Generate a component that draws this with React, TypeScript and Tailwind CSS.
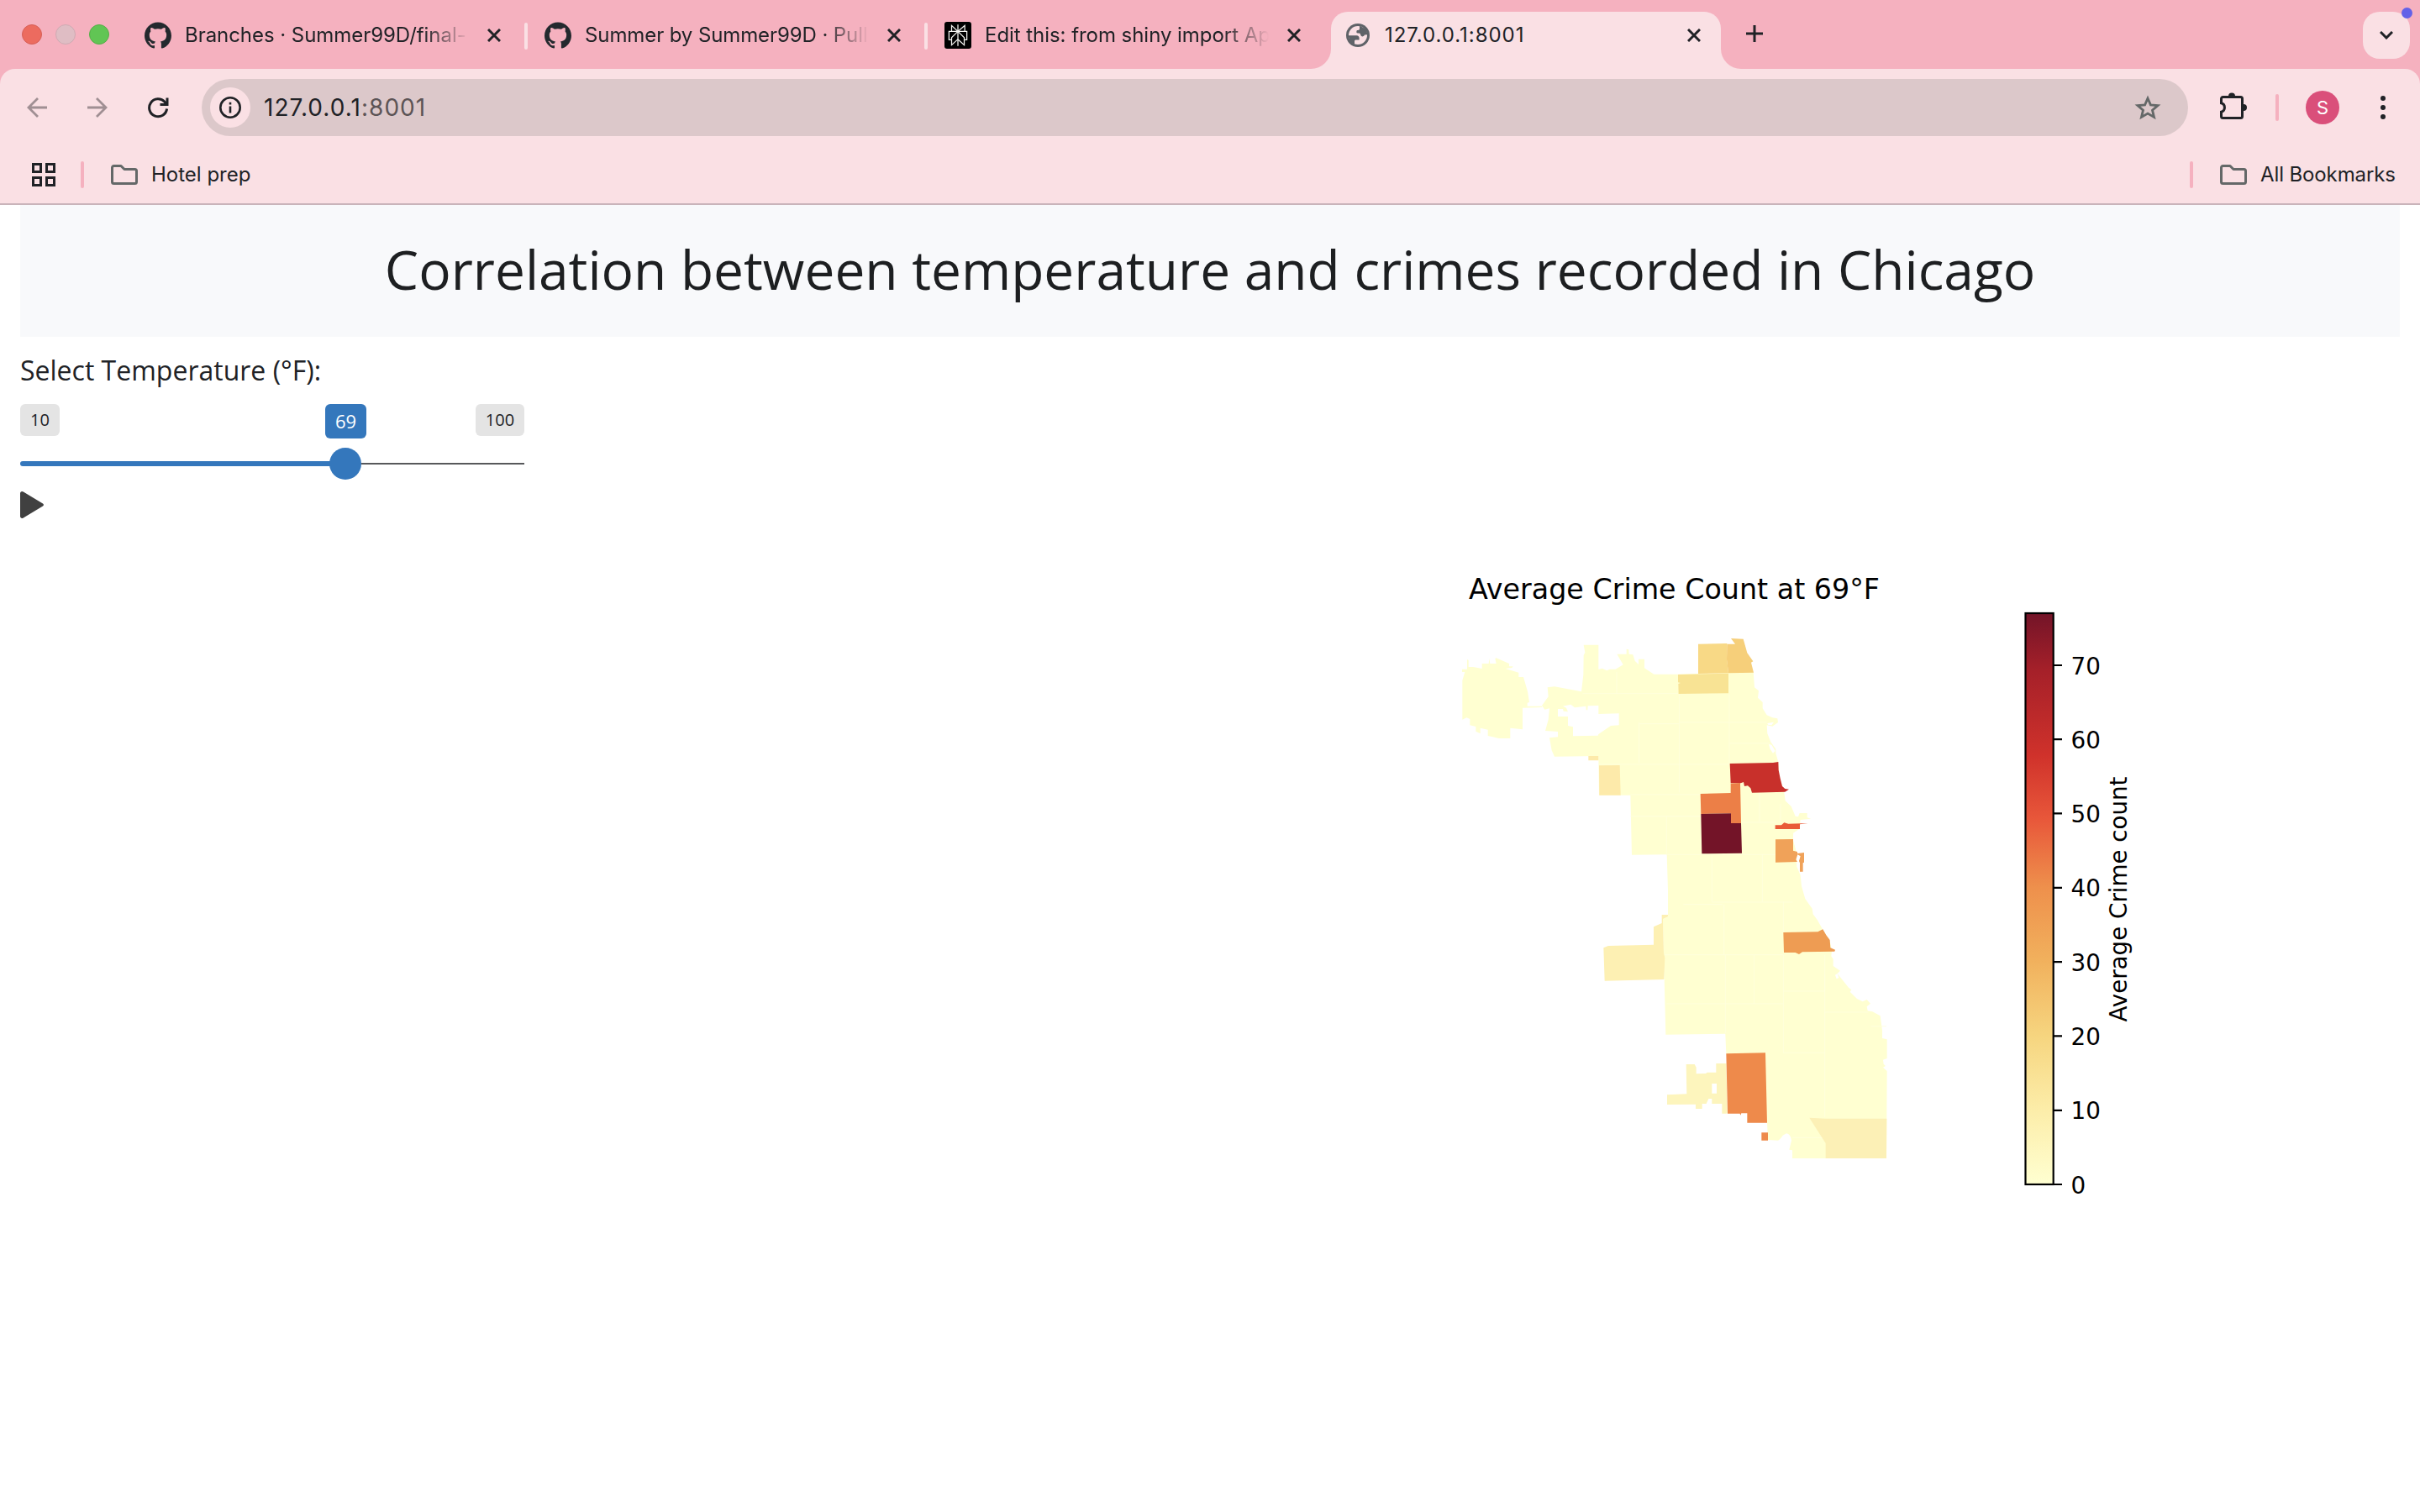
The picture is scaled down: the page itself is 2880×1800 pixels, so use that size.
import React from "react";
import { SiGithub } from "react-icons/si";

const ui = "font-['Inter','Liberation_Sans',sans-serif]";

function CloseIcon() {
  return (
    <svg className="size-4 shrink-0" viewBox="0 0 16 16" fill="none" stroke="#202226" strokeWidth="3">
      <path d="M1 1L15 15M15 1L1 15" />
    </svg>
  );
}

function PerplexityIcon() {
  return (
    <span className="flex size-8 shrink-0 items-center justify-center rounded-[3px] bg-black">
      <svg className="size-[26px]" viewBox="0 0 24 24" fill="#f4f4f0">
        <path d="M22.3977 7.0896h-2.3106V.0676l-7.5094 6.3542V.1577h-1.1554v6.1966L4.4904 0v7.0896H1.6023v10.3976h2.8882V24l6.932-6.3591v6.2005h1.1554v-6.0469l6.9318 6.1807v-6.4879h2.8882V7.0896zm-3.4657-4.531v4.531h-5.355l5.355-4.531zm-13.2862.0676 4.8691 4.4634H5.6458V2.6262zM2.7576 16.332V8.245h7.8476l-6.1149 6.1147v1.9723H2.7576zm2.8882 5.0404v-3.8852h.0001v-2.6488l5.7763-5.7764v7.0111l-5.7764 5.2993zm12.7086.0248-5.7766-5.1509V9.0618l5.7766 5.7766v6.5588zm2.8882-5.0652h-1.733v-1.9723L13.3948 8.245h7.8478v8.087z" />
      </svg>
    </span>
  );
}

function FolderIcon() {
  return (
    <svg className="h-6 w-8 shrink-0" viewBox="0 0 32 24" fill="none" stroke="#646868" strokeWidth="3" strokeLinejoin="round">
      <path d="M1.5 3.5a2 2 0 0 1 2-2H12l4 4h12.5a2 2 0 0 1 2 2v13a2 2 0 0 1-2 2h-25a2 2 0 0 1-2-2z" />
    </svg>
  );
}

function Tab({ icon, title, width, fade, spacing }: { icon: React.ReactNode; title: string; width: string; fade: string; spacing: string }) {
  return (
    <div className={`flex h-8 shrink-0 items-center ${width}`}>
      {icon}
      <div className={`ml-4 w-[338px] overflow-hidden whitespace-nowrap text-[24px] leading-8 text-[#202226] ${fade} ${spacing}`}>{title}</div>
      <div className="ml-[22px] flex">
        <CloseIcon />
      </div>
    </div>
  );
}

function TabStrip() {
  const fade = "[mask-image:linear-gradient(to_right,black_84%,transparent_100%)]";
  return (
    <div className="flex h-[82px] bg-[#f5b1bf]">
      <div className="flex h-[82px] w-[172px] shrink-0 items-center gap-4 pl-[26px]">
        <div className="size-6 rounded-full border border-[#d65f57] bg-[#ec6b5f]" />
        <div className="size-6 rounded-full border border-[#cfaab2] bg-[#dfbdc4]" />
        <div className="size-6 rounded-full border border-[#56ad48] bg-[#61c554]" />
      </div>
      <div className="flex h-8 pt-[26px]">
        <Tab icon={<SiGithub className="size-8 shrink-0 text-[#24292e]" />} title="Branches · Summer99D/final-" width="w-[452px]" fade={fade} spacing="tracking-[-0.05px]" />
        <div className="mt-px h-8 w-1 shrink-0 rounded-full bg-[#fae0e4]" />
        <div className="w-5 shrink-0" />
        <Tab icon={<SiGithub className="size-8 shrink-0 text-[#24292e]" />} title="Summer by Summer99D · Pull" width="w-[452px]" fade={fade} spacing="tracking-[-0.1px]" />
        <div className="mt-px h-8 w-1 shrink-0 rounded-full bg-[#fae0e4]" />
        <div className="w-5 shrink-0" />
        <Tab icon={<PerplexityIcon />} title="Edit this: from shiny import Ap" width="w-[436px]" fade={fade} spacing="tracking-[-0.05px]" />
      </div>
      <svg className="mt-[14px] h-[68px] w-6 shrink-0" viewBox="0 0 24 68" fill="#fae0e4">
        <path d="M24 44A24 24 0 0 1 0 68H24z" />
      </svg>
      <div className="mt-[14px] flex h-[68px] w-[464px] shrink-0 rounded-t-[20px] bg-[#fae0e4] pl-[18px] pt-[14px]">
        <GlobeIcon />
        <div className="-mt-[2px] ml-[18px] w-[360px] whitespace-nowrap text-[24px] leading-8 tracking-[0.95px] text-[#202226]">127.0.0.1:8001</div>
        <div className="mt-[6px]">
          <CloseIcon />
        </div>
      </div>
      <svg className="mt-[14px] h-[68px] w-6 shrink-0" viewBox="0 0 24 68" fill="#fae0e4">
        <path d="M0 44A24 24 0 0 0 24 68H0z" />
      </svg>
      <svg className="ml-[6px] mt-[30px] size-5 shrink-0" viewBox="0 0 20 20" stroke="#202226" strokeWidth="3">
        <path d="M10 0V20M0 10H20" />
      </svg>
      <div className="relative ml-auto mr-3 mt-[14px] flex size-14 items-center justify-center rounded-[20px] bg-[#fae0e4]">
        <svg className="h-[10px] w-4" viewBox="0 0 16 10" fill="none" stroke="#202226" strokeWidth="3">
          <path d="M1 1L8 8L15 1" />
        </svg>
        <div className="absolute -right-[3px] -top-[5px] size-[13px] rounded-full bg-[#6361e8]" />
      </div>
    </div>
  );
}

function GlobeIcon() {
  return (
    <svg className="size-7 shrink-0" viewBox="0 0 28 28">
      <circle cx="14" cy="14" r="14" fill="#5f6368" />
      <circle cx="14" cy="14" r="11" fill="#fae0e4" />
      <path
        d="M2.500 14.200H12.500Q15.600 14.600 15.600 17.500V19.400H11.200Q10 19.600 10 21V25L5 23zM16 2.500V6.200Q16 8 14.200 8H13.200Q12.400 8.200 12.400 9.200V10.800Q12.600 11.600 14 11.600H15.600Q17 11.800 17.200 13.500Q17.600 15.400 19.600 15.400Q21.600 15.200 22 13.600L25.500 13.200L24 7z"
        fill="#5f6368"
      />
    </svg>
  );
}

function Toolbar() {
  return (
    <div className="bg-[#f5b1bf]">
      <div className="flex h-[92px] items-center rounded-t-[18px] bg-[#fae0e4]">
        <svg className="ml-8 size-6 shrink-0" viewBox="0 0 24 24" fill="none" stroke="#a08f93" strokeWidth="2.8">
          <path d="M24 12H2M13 1L2 12L13 23" />
        </svg>
        <svg className="ml-12 size-6 shrink-0" viewBox="0 0 24 24" fill="none" stroke="#a08f93" strokeWidth="2.8">
          <path d="M0 12H22M11 1L22 12L11 23" />
        </svg>
        <svg className="ml-12 size-[25px] shrink-0" viewBox="0 0 25 25" fill="none" stroke="#202226" strokeWidth="3">
          <path d="M22.6 13.5A10.5 10.5 0 1 1 20 5.3L22.5 8.3" />
          <path d="M23 .5V8.6H14.5" />
        </svg>
        <div className="ml-[39px] flex h-[68px] w-[2364px] items-center rounded-full bg-[#dcc8ca] pl-[10px] pr-8">
          <div className="flex size-12 items-center justify-center rounded-full bg-[#fae0e4]">
            <svg className="size-[26px]" viewBox="0 0 26 26" fill="none" stroke="#202226" strokeWidth="2.6">
              <circle cx="13" cy="13" r="11.7" />
              <path d="M13 11.5V19.5M13 6.8V9.4" />
            </svg>
          </div>
          <div className="ml-4 text-[28px] leading-9 tracking-[1.05px] text-[#202226]">
            127.0.0.1<span className="text-[#5c5456]">:8001</span>
          </div>
          <svg className="ml-auto h-[30px] w-8 shrink-0" viewBox="0 0 32 30" fill="none" stroke="#646868" strokeWidth="2.8">
            <path d="M16 4L19.4 11.9L28 12.6L21.5 18.2L23.5 26.4L16 22L8.500 26.400L10.5 18.2L4 12.600L12.600 11.900z" />
          </svg>
        </div>
        <svg className="mb-1 ml-[38px] size-8 shrink-0" viewBox="0 0 32 32">
          <path d="M3.500 5.500H24.500a2 2 0 0 1 2 2V28.500a2 2 0 0 1-2 2H3.500a2 2 0 0 1-2-2V23.200a5.400 5.400 0 0 0 0-10.400V7.500a2 2 0 0 1 2-2z" fill="none" stroke="#202226" strokeWidth="3" />
          <path d="M10 4.500a4 4 0 0 1 8 0zM28 14a4 4 0 0 1 0 8z" fill="#202226" />
        </svg>
        <div className="ml-[34px] h-8 w-1 rounded-full bg-[#f5b1bf]" />
        <div className="ml-8 flex size-10 items-center justify-center rounded-full bg-[#da4f7a] text-[22px] text-white">S</div>
        <svg className="ml-[49px] h-7 w-[6px]" viewBox="0 0 6 28" fill="#202226">
          <circle cx="3" cy="3" r="3" />
          <circle cx="3" cy="14" r="3" />
          <circle cx="3" cy="25" r="3" />
        </svg>
      </div>
    </div>
  );
}

function BookmarksBar() {
  return (
    <div className="flex h-[70px] items-center border-b-2 border-[#c9b4ba] bg-[#fae0e4] pb-0 text-[24px] text-[#202226]">
      <svg className="ml-[38px] size-7" viewBox="0 0 28 28" fill="none" stroke="#202226" strokeWidth="3">
        <path d="M1.500 1.500h9v9h-9zM17.500 1.500h9v9h-9zM1.500 17.500h9v9h-9zM17.500 17.500h9v9h-9z" />
      </svg>
      <div className="ml-[30px] h-8 w-1 rounded-full bg-[#f5b1bf]" />
      <div className="ml-8 flex items-center gap-4">
        <FolderIcon />
        <span>Hotel prep</span>
      </div>
      <div className="ml-auto h-8 w-1 rounded-full bg-[#f5b1bf]" />
      <div className="ml-8 flex w-[238px] items-center gap-4 whitespace-nowrap">
        <FolderIcon />
        <span className="tracking-[-0.12px]">All Bookmarks</span>
      </div>
    </div>
  );
}

function TemperatureSlider() {
  return (
    <div className="ml-6 w-[600px] text-[#202226]">
      <div className="mt-[18px] text-[32px] leading-[44px]">Select Temperature (°F):</div>
      <div className="mt-[18px] flex h-[41px] items-start">
        <div className="flex h-[38px] w-[47px] items-center justify-center rounded-md bg-[#e4e4e4] text-[20px]">10</div>
        <div className="ml-[316px] flex h-[41px] w-[49px] items-center justify-center rounded-md bg-[#3477bc] text-[22px] text-white">69</div>
        <div className="ml-auto flex h-[38px] w-[58px] items-center justify-center rounded-md bg-[#e4e4e4] text-[20px]">100</div>
      </div>
      <div className="mt-[11px] flex h-[38px] items-center">
        <div className="h-[6px] w-[369px] rounded-l-sm bg-[#3477bc]" />
        <div className="-ml-px size-[38px] shrink-0 rounded-full bg-[#3477bc]" />
        <div className="h-[2px] grow bg-[#57585b]" />
      </div>
      <svg className="mt-[14px] h-8 w-7" viewBox="0 0 28 32" fill="#404040">
        <path d="M0 2.500C0 .4 2 -.6 3.800 .6L27 14.400C28.300 15.300 28.300 16.700 27 17.600L3.800 31.400C2 32.600 0 31.600 0 29.500z" />
      </svg>
    </div>
  );
}

const TICKS = [
  { label: "70", y: 792 },
  { label: "60", y: 880.2 },
  { label: "50", y: 968.4 },
  { label: "40", y: 1056.800 },
  { label: "30", y: 1145.100 },
  { label: "20", y: 1233.400 },
  { label: "10", y: 1321.900 },
  { label: "0", y: 1410 },
];

function CrimeMap() {
  return (
    <svg className="ml-[1720px] mt-[43px] h-[780px] w-[860px] shrink-0" viewBox="1720 660 860 780">
      <defs>
        <linearGradient id="heat" x1="0" y1="1" x2="0" y2="0">
          <stop offset="0" stopColor="#ffffd1" />
          <stop offset=".13" stopColor="#fceda9" />
          <stop offset=".26" stopColor="#f6d57f" />
          <stop offset=".39" stopColor="#f1b15d" />
          <stop offset=".52" stopColor="#ee904c" />
          <stop offset=".64" stopColor="#e8573a" />
          <stop offset=".75" stopColor="#d0322b" />
          <stop offset=".9" stopColor="#a52029" />
          <stop offset="1" stopColor="#731428" />
        </linearGradient>
      </defs>
      <g fontFamily="DejaVu Sans, sans-serif" fill="#000">
        <text x="1748" y="712.700" fontSize="33.300" textLength="489">Average Crime Count at 69°F</text>
        {TICKS.map((t) => (
          <text key={t.label} x="2464.500" y={t.y + 10.500} fontSize="27.800">
            {t.label}
          </text>
        ))}
        <text transform="translate(2531 1216.500) rotate(-90)" fontSize="27.800" textLength="292">Average Crime count</text>
      </g>
      <g transform="translate(1720 660) scale(.33333)">
        <g fill="#ffffd1" fillRule="evenodd">
          <path d="M60 410H78V375L83 378V402H100L131 408V390H155L157 372L160 390H182L178 372L182 370L228 390V400H242L238 405L215 408L262 422V438H279L294 490L300 528L293 530V542H345V546L276 548V625L232 620V657H192L152 648V626L125 620V640L109 632V615L88 610V588L76 583L61 590V450L70 420H60z" />
          <path d="M345 540L368 508L365 475L390 472L486 490L493 430L494 360L499 350L494 323H547V411L560 407L577 415L587 410H608L635 394L613 356H647V338L655 340L656 356L670 358L677 380L690 393V374H711V406L745 428H831L903 426L1100 420L1104 475L1119 487L1116 512L1133 528V550L1148 574L1168 583L1186 586L1188 600L1168 614L1148 610L1150 640L1162 670L1180 695V710L1189 742L1192 790L1210 850L1214 880L1235 900L1250 935L1260 937L1265 924H1292V940L1306 944L1268 948L1265 980L1243 995L1242 1020L1253 1060L1255 1115L1268 1145L1272 1185L1285 1230L1310 1265L1313 1285L1328 1305L1348 1340L1373 1380L1380 1415L1378 1435L1385 1445V1470L1410 1487L1400 1497L1440 1547L1450 1555L1445 1562L1470 1587L1490 1597L1505 1590L1518 1604L1505 1615L1508 1630L1525 1633L1553 1648L1560 1700V1728L1577 1732V1800L1563 1805L1565 1820L1572 1827L1563 1832L1577 1845L1575 2157H1239V2128L1228 2126L1236 2093Q1233 2070 1218 2068L1205 2075Q1195 2090 1188 2093L1152 2091L1149 2030L1003 1783L1000 1712L787 1715L780 1430L777 1302L795 1294V1200L791 1072L666 1073L661 860H549L547 720L390 722L380 700L372 655L402 652V633L357 630L368 590L372 550L355 554zM402 552H420L422 560L438 562L432 548L420 542L448 536L462 547L502 542L503 556H508L509 541L547 540V570L620 568V610L591 612L547 642L545 647L456 649V616L438 612V579H402zM1150 603L1173 599L1165 610L1152 608zM1155 678L1165 680L1178 702L1170 710L1160 695zM1392 1502L1400 1497L1405 1512L1397 1516z" />
        </g>
        <g fill="none" stroke="#ffffde" strokeWidth="2.500">
          <path d="M490 497H831M612 420V497M692 600V745M692 605H835M835 498V850M1014 500V745M835 600H1148M1014 675H1160M549 750H1014M661 858H911M661 935H913M1122 850V955M1197 890V960M1059 957H1180M790 935V1072H1180M952 1070V1240M1132 1070V1240M850 1250H990M952 1242H1240M995 1250V1430M1207 1240V1350M780 1430H1207M1102 1430V1605M790 1605H1207M1000 1430V1710M1207 1430V1780M1207 1560H1355V1430M1355 1500V2010M1355 1635H1510M1207 1780H1355M1520 1685H1575M1239 2083H1355" />
        </g>
        <path fill="#f8d986" d="M903 320L1006 318L1005 370L1011 424L903 426z" />
        <path fill="#f6cf7a" d="M1006 320H1035L1020 300L1064 302L1078 352L1099 382L1092 386L1101 422L1011 424L1005 375z" />
        <path fill="#f8e394" d="M831 429L1011 425V496L833 498L832 462L840 459L831 457z" />
        <path fill="#fdeaaa" d="M511 720H547V736H511zM549 754L623 753L626 860H550z" />
        <path fill="#c8302b" d="M1016 747L1170 744L1189 741L1190 770L1196 800L1203 828L1213 837L1227 839L1213 848L1095 851L1090 835L1080 826L1068 828L1065 813L1055 817H1019z" />
        <path fill="#ec7f47" d="M911 855L1019 852V818L1053 816L1056 960H1020V925L913 927z" />
        <path fill="#731428" d="M913 927L1020 925V960H1056L1059 1067L916 1069z" />
        <path fill="#ffffff" d="M1265 982L1320 955L1320 1100H1258L1254 1060L1242 1018L1243 995z" />
        <g transform="translate(720 240)">
          <path fill="#e95c39" d="M458 727H480L490 718L505 722L575 720L546 724V741H458z" />
          <path fill="#f0a259" d="M459 778L522 777V818L537 822V828L561 825V860L557 862V893H546V862L543 855L548 838L538 832L532 850L537 858L459 860z" />
          <path fill="#ee9c53" d="M487 1110L610 1108L628 1099L640 1120L653 1137L655 1165L672 1172L670 1178L555 1180L543 1188L530 1182H489z" />
        </g>
        <g transform="translate(480 1200)">
          <path fill="#fdf0b3" d="M85 205L102 198L264 194V130L293 117V87H315V94L297 102L300 225L304 240L301 318L89 323z" />
          <path fill="#fdf5bd" fillRule="evenodd" d="M380 621H410L416 632V655L450 654L455 650H487V618H523L527 797H508V762H472V744H460L452 762H437V780H414V764L312 765V730L382 727zM472 690V725H489V690z" />
          <path fill="#fff" d="M523 797H598V830H669V865H640V900H523z" />
          <path fill="#ee8a4b" d="M523 583L663 580L669 830H598V796H577L574 803L572 797H528zM649 865H672V893H649z" />
          <path fill="#fcf0b6" d="M820 812L880 815H1096L1095 957H878V903z" />
        </g>
      </g>
      <rect x="2410.500" y="730" width="33.200" height="680" fill="url(#heat)" stroke="#000" strokeWidth="2.200" />
      <path d={TICKS.map((t) => `M2444 ${t.y}H2454`).join("")} stroke="#000" strokeWidth="2.200" />
    </svg>
  );
}

export default function App() {
  return (
    <div className="flex h-[1800px] w-[2880px] flex-col overflow-hidden bg-white">
      <div className={ui}>
        <TabStrip />
        <Toolbar />
        <BookmarksBar />
      </div>
      <div className="font-['Open_Sans',sans-serif]">
        <h1 className="mx-6 flex h-[157px] items-center justify-center whitespace-nowrap bg-[#f8f9fb] pb-1 text-[64px] text-[#1d1f21]">
          Correlation between temperature and crimes recorded in Chicago
        </h1>
        <TemperatureSlider />
      </div>
      <CrimeMap />
    </div>
  );
}
